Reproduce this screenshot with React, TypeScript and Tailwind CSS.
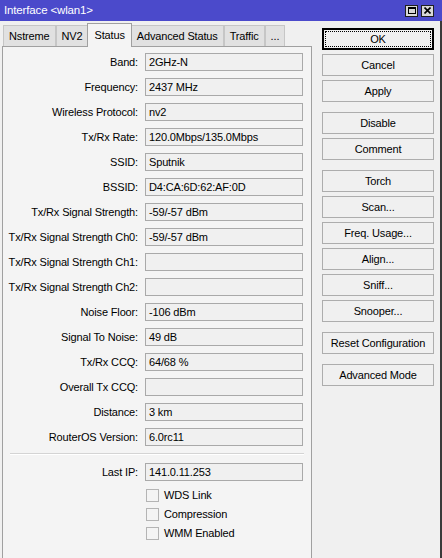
import React from 'react';

const rows: [string, string][] = [
  ['Band:', '2GHz-N'],
  ['Frequency:', '2437 MHz'],
  ['Wireless Protocol:', 'nv2'],
  ['Tx/Rx Rate:', '120.0Mbps/135.0Mbps'],
  ['SSID:', 'Sputnik'],
  ['BSSID:', 'D4:CA:6D:62:AF:0D'],
  ['Tx/Rx Signal Strength:', '-59/-57 dBm'],
  ['Tx/Rx Signal Strength Ch0:', '-59/-57 dBm'],
  ['Tx/Rx Signal Strength Ch1:', ''],
  ['Tx/Rx Signal Strength Ch2:', ''],
  ['Noise Floor:', '-106 dBm'],
  ['Signal To Noise:', '49 dB'],
  ['Tx/Rx CCQ:', '64/68 %'],
  ['Overall Tx CCQ:', ''],
  ['Distance:', '3 km'],
  ['RouterOS Version:', '6.0rc11'],
];

const tabs = ['Nstreme', 'NV2', 'Status', 'Advanced Status', 'Traffic', '...'];

const buttonGroups = [
  ['OK', 'Cancel', 'Apply'],
  ['Disable', 'Comment'],
  ['Torch', 'Scan...', 'Freq. Usage...', 'Align...', 'Sniff...', 'Snooper...'],
  ['Reset Configuration'],
  ['Advanced Mode'],
];

function Field({ label, value }: { label: string; value: string }) {
  return (
    <div className="flex items-center h-[18px] mb-[7px]">
      <div className="w-[135px] text-right whitespace-nowrap">{label}</div>
      <div className="ml-[7px] w-[158px] h-[18px] border border-[#a9a9a9] bg-[#f0f0f0] px-[3px] leading-[16px] whitespace-nowrap overflow-hidden">
        {value}
      </div>
    </div>
  );
}

function Check({ label }: { label: string }) {
  return (
    <div className="flex items-center h-[19px] pl-[143px]">
      <div className="w-[13px] h-[13px] border border-[#b4b4b4] bg-[#f4f4f4]" />
      <span className="ml-[5px]">{label}</span>
    </div>
  );
}

export default function App() {
  return (
    <div
      className="w-[442px] h-[558px] bg-[#f0f0f0] text-[11px] tracking-[-0.15px] text-black flex flex-col overflow-hidden"
      style={{ fontFamily: '"Liberation Sans", Arial, sans-serif' }}
    >
      {/* title bar */}
      <div className="h-[21px] bg-[#4b4acb] flex items-center pl-[4px] pr-[8px] shrink-0">
        <span className="text-white text-[11.5px]">Interface &lt;wlan1&gt;</span>
        <div className="ml-auto flex gap-[3px]">
          <div className="w-[13px] h-[12px] bg-[#d8d8d8] border border-[#202020] flex items-center justify-center">
            <div className="w-[8px] h-[7px] border border-black border-t-2" />
          </div>
          <div className="w-[13px] h-[12px] bg-[#d8d8d8] border border-[#202020] flex items-center justify-center">
            <svg width="7" height="7" viewBox="0 0 7 7">
              <path d="M0.5 0.5 L6.5 6.5 M6.5 0.5 L0.5 6.5" stroke="black" strokeWidth="1.6" />
            </svg>
          </div>
        </div>
      </div>

      <div className="flex flex-1 border-r-2 border-[#3a3a3a]">
        {/* left side: tabs + panel */}
        <div className="w-[312px] pl-[2px] flex flex-col">
          <div className="flex items-end h-[25px] pl-[1px]">
            {tabs.map((t) =>
              t === 'Status' ? (
                <div
                  key={t}
                  className="h-[24px] px-[6px] border border-b-0 border-[#a0a0a0] bg-[#f4f4f4] -mb-px relative z-10 flex items-center -mx-px"
                >
                  {t}
                </div>
              ) : (
                <div
                  key={t}
                  className="h-[21px] px-[5px] border border-b-0 border-[#c6c6c6] bg-[#e1e1e1] flex items-center"
                >
                  {t}
                </div>
              )
            )}
          </div>
          <div className="flex-1 border border-b-0 border-[#a0a0a0] bg-[#f4f4f4] pt-[6px]">
            {rows.map(([l, v]) => (
              <Field key={l} label={l} value={v} />
            ))}
            <div className="mx-[7px] mt-[2px] h-px bg-[#d4d4d4] border-b border-white box-content" />
            <div className="mt-[8px]">
              <Field label="Last IP:" value="141.0.11.253" />
            </div>
            <div className="-mt-[2px]">
              <Check label="WDS Link" />
              <Check label="Compression" />
              <Check label="WMM Enabled" />
            </div>
          </div>
        </div>

        {/* right side: buttons */}
        <div className="flex-1 pl-[10px] pt-[7px] flex flex-col gap-[10px]">
          {buttonGroups.map((g, gi) => (
            <div key={gi} className="flex flex-col gap-[4px]">
              {g.map((b) =>
                b === 'OK' ? (
                  <div
                    key={b}
                    className="w-[112px] h-[22px] border-2 border-black bg-[#f0f0f0] p-[1px]"
                  >
                    <div className="w-full h-full border border-dotted border-black flex items-center justify-center">
                      {b}
                    </div>
                  </div>
                ) : (
                  <div
                    key={b}
                    className="w-[112px] h-[22px] border border-[#adadad] bg-[#f0f0f0] flex items-center justify-center whitespace-nowrap"
                  >
                    {b}
                  </div>
                )
              )}
            </div>
          ))}
        </div>
      </div>
    </div>
  );
}
